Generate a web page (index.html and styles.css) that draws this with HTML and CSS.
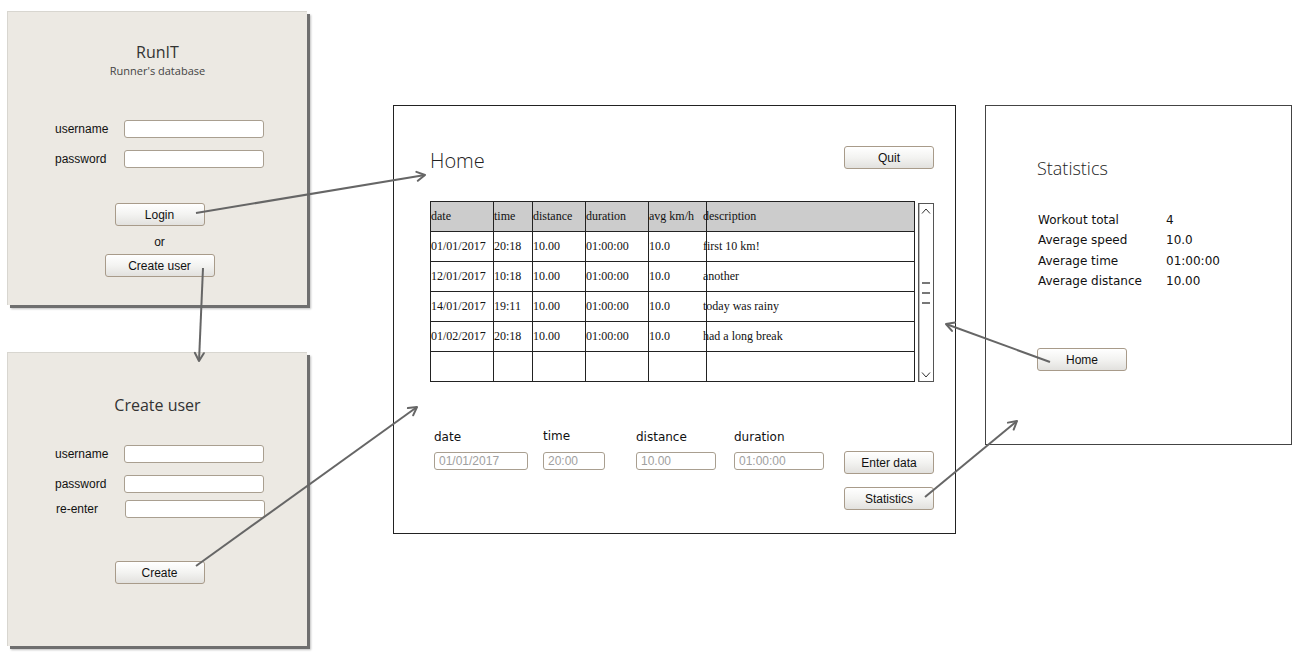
FILE: index.html
```html
<!DOCTYPE html>
<html lang="en">
<head>
    <meta charset="UTF-8">
    <meta name="viewport" content="width=device-width, initial-scale=1.0">
    <title>RunIT wireframe</title>
    <link rel="stylesheet" href="styles.css">
</head>
<body>
    <div class="canvas">

        <!-- login screen -->
        <div class="window panel login">
            <div class="title">RunIT</div>
            <div class="subtitle">Runner's database</div>
            <div class="form">
                <div class="row">
                    <label>username</label>
                    <input type="text" class="field">
                </div>
                <div class="row">
                    <label>password</label>
                    <input type="password" class="field">
                </div>
            </div>
            <button class="btn btn-login">Login</button>
            <div class="or">or</div>
            <button class="btn btn-create">Create user</button>
        </div>

        <!-- create user screen -->
        <div class="window panel register">
            <div class="title">Create user</div>
            <div class="form">
                <div class="row">
                    <label>username</label>
                    <input type="text" class="field">
                </div>
                <div class="row">
                    <label>password</label>
                    <input type="password" class="field">
                </div>
                <div class="row tight">
                    <label>re-enter</label>
                    <input type="password" class="field">
                </div>
            </div>
            <button class="btn btn-submit">Create</button>
        </div>

        <!-- home screen -->
        <div class="window home">
            <div class="home-header">
                <div class="home-title">Home</div>
                <button class="btn">Quit</button>
            </div>
            <div class="table-wrap">
                <table class="runs">
                    <colgroup>
                        <col style="width:63px">
                        <col style="width:39px">
                        <col style="width:53px">
                        <col style="width:63px">
                        <col style="width:58px">
                        <col>
                    </colgroup>
                    <tr class="head">
                        <td>date</td><td>time</td><td>distance</td><td>duration</td><td>avg km/h</td><td class="desc">description</td>
                    </tr>
                    <tr>
                        <td>01/01/2017</td><td>20:18</td><td>10.00</td><td>01:00:00</td><td>10.0</td><td class="desc">first 10 km!</td>
                    </tr>
                    <tr>
                        <td>12/01/2017</td><td>10:18</td><td>10.00</td><td>01:00:00</td><td>10.0</td><td class="desc">another</td>
                    </tr>
                    <tr>
                        <td>14/01/2017</td><td>19:11</td><td>10.00</td><td>01:00:00</td><td>10.0</td><td class="desc">today was rainy</td>
                    </tr>
                    <tr>
                        <td>01/02/2017</td><td>20:18</td><td>10.00</td><td>01:00:00</td><td>10.0</td><td class="desc">had a long break</td>
                    </tr>
                    <tr>
                        <td></td><td></td><td></td><td></td><td></td><td class="desc"></td>
                    </tr>
                </table>
                <div class="scrollbar">
                    <svg class="chev" width="10" height="6" viewBox="0 0 10 6"><path d="M1 5.5 L5 1 L9 5.5" fill="none" stroke="#333" stroke-width="1"/></svg>
                    <div class="grip">
                        <span></span><span></span><span></span>
                    </div>
                    <svg class="chev" width="10" height="6" viewBox="0 0 10 6"><path d="M1 0.5 L5 5 L9 0.5" fill="none" stroke="#333" stroke-width="1"/></svg>
                </div>
            </div>
            <div class="entry">
                <div class="entry-field">
                    <label>date</label>
                    <input type="text" class="field w-date" placeholder="01/01/2017">
                </div>
                <div class="entry-field">
                    <label class="up">time</label>
                    <input type="text" class="field w-time" placeholder="20:00">
                </div>
                <div class="entry-field">
                    <label>distance</label>
                    <input type="text" class="field w-dist" placeholder="10.00">
                </div>
                <div class="entry-field">
                    <label>duration</label>
                    <input type="text" class="field w-dur" placeholder="01:00:00">
                </div>
                <div class="entry-actions">
                    <button class="btn">Enter data</button>
                    <button class="btn">Statistics</button>
                </div>
            </div>
        </div>

        <!-- statistics screen -->
        <div class="window stats">
            <div class="stats-title">Statistics</div>
            <div class="stats-grid">
                <span>Workout total</span><span>4</span>
                <span>Average speed</span><span>10.0</span>
                <span>Average time</span><span>01:00:00</span>
                <span>Average distance</span><span>10.00</span>
            </div>
            <button class="btn">Home</button>
        </div>

        <!-- navigation arrows -->
        <svg class="arrows" width="1300" height="666" viewBox="0 0 1300 666">
            <defs>
                <marker id="head" markerUnits="userSpaceOnUse" markerWidth="12" markerHeight="12" viewBox="0 0 12 12" refX="10" refY="6" orient="auto">
                    <path d="M2 1.5 L10 6 L2 10.5" fill="none" stroke="#666" stroke-width="2" stroke-linecap="round" stroke-linejoin="round"/>
                </marker>
            </defs>
            <line x1="196" y1="213" x2="425" y2="175" marker-end="url(#head)"/>
            <line x1="203" y1="268" x2="199" y2="361" marker-end="url(#head)"/>
            <line x1="196" y1="566" x2="417" y2="407" marker-end="url(#head)"/>
            <line x1="925" y1="497" x2="1017" y2="421" marker-end="url(#head)"/>
            <line x1="1050" y1="362" x2="946" y2="324" marker-end="url(#head)"/>
        </svg>
    </div>
</body>
</html>
```

FILE: styles.css
```css
body {
    margin: 0;
    background: #fff;
    font-family: "Liberation Sans", Arial, sans-serif;
    font-size: 12px;
    color: #111;
}

.canvas {
    position: relative;
    width: 1300px;
    height: 666px;
    overflow: hidden;
}

.window {
    position: absolute;
    box-sizing: border-box;
}

/* grey dialog panels on the left */
.panel {
    width: 300px;
    height: 294px;
    left: 7px;
    background: #ece9e3;
    border-left: 1px solid #d8d6d0;
    border-top: 1px solid #d8d6d0;
    box-shadow: 3px 3px 0 #6f6f6f, 4px 4px 2px rgba(0, 0, 0, 0.25);
    display: flex;
    flex-direction: column;
    align-items: center;
}

.login {
    top: 11px;
    padding-top: 30px;
}

.register {
    top: 352px;
    padding-top: 42px;
}

.title {
    font-family: "Open Sans", sans-serif;
    font-size: 16px;
    line-height: 20px;
    color: #333;
}

.subtitle {
    font-family: "Open Sans", sans-serif;
    font-size: 11px;
    line-height: 14px;
    color: #444;
    margin-top: 2px;
}

.form {
    align-self: stretch;
    padding-left: 47px;
    margin-top: 42px;
}

.register .form {
    margin-top: 30px;
}

.row {
    display: flex;
    align-items: center;
    height: 18px;
    margin-bottom: 12px;
}

.row label {
    width: 69px;
    color: #111;
}

.row.tight {
    margin-top: -5px;
    padding-left: 1px;
}

.field {
    box-sizing: border-box;
    height: 18px;
    margin: 0;
    padding: 0 4px;
    background: #fff;
    border: 1px solid #a99f90;
    border-radius: 3px;
    font-family: "Liberation Sans", Arial, sans-serif;
    font-size: 12px;
    outline: none;
}

.row .field {
    width: 140px;
}

.field::placeholder {
    color: #a0a0a0;
}

.btn {
    box-sizing: border-box;
    width: 90px;
    height: 23px;
    padding: 0;
    background: linear-gradient(#ffffff, #f3f3f1 50%, #e2e1de);
    border: 1px solid #a89b8a;
    border-radius: 3px;
    font-family: "Liberation Sans", Arial, sans-serif;
    font-size: 12px;
    color: #111;
}

.btn-login {
    margin-top: 23px;
    margin-left: 4px;
}

.or {
    margin-top: 9px;
    margin-left: 4px;
    line-height: 14px;
}

.btn-create {
    width: 110px;
    margin-top: 5px;
    margin-left: 4px;
}

.btn-submit {
    margin-top: 31px;
    margin-left: 4px;
}

/* home screen */
.home {
    left: 393px;
    top: 105px;
    width: 563px;
    height: 429px;
    border: 1px solid #222;
    background: #fff;
    padding: 40px 21px 0 36px;
}

.home-header {
    display: flex;
    justify-content: space-between;
    align-items: flex-start;
}

.home-title {
    font-family: "Open Sans", sans-serif;
    font-weight: 300;
    font-size: 20px;
    line-height: 24px;
    margin-top: 3px;
    color: #222;
}

.table-wrap {
    display: flex;
    align-items: flex-start;
    margin-top: 28px;
}

.runs {
    width: 485px;
    table-layout: fixed;
    border-collapse: collapse;
    font-family: "Liberation Serif", "Times New Roman", serif;
    font-size: 12px;
    color: #111;
}

.runs td {
    height: 29px;
    padding: 0;
    border: 1px solid #222;
    white-space: nowrap;
    overflow: visible;
}

.runs .head td {
    background: #cccccc;
}

.runs td.desc {
    text-indent: -4px;
}

.scrollbar {
    box-sizing: border-box;
    width: 16px;
    height: 179px;
    margin-left: 3px;
    margin-top: 2px;
    border: 1px solid #555;
    box-shadow: inset 1px 0 0 #bbb;
    display: flex;
    flex-direction: column;
    align-items: center;
    justify-content: space-between;
    padding: 4px 0 3px;
}

.grip {
    display: flex;
    flex-direction: column;
    gap: 8px;
}

.grip span {
    display: block;
    width: 8px;
    height: 2px;
    background: #777;
}

.chev {
    display: block;
}

.entry {
    display: grid;
    grid-template-columns: 109px 93px 98px 110px 90px;
    padding-left: 4px;
    margin-top: 47px;
}

.entry-field {
    display: flex;
    flex-direction: column;
    align-items: flex-start;
}

.entry-field label {
    font-family: "DejaVu Sans", Verdana, sans-serif;
    font-size: 12px;
    line-height: 16px;
    color: #111;
}

.entry-field label.up {
    margin-top: -1px;
    margin-bottom: 1px;
}

.entry-field .field {
    margin-top: 7px;
    height: 18px;
    padding: 0 4px;
}

.w-date { width: 94px; }
.w-time { width: 62px; }
.w-dist { width: 80px; }
.w-dur  { width: 90px; }

.entry-actions {
    display: flex;
    flex-direction: column;
    gap: 13px;
    margin-top: 22px;
}

/* statistics screen */
.stats {
    left: 985px;
    top: 105px;
    width: 307px;
    height: 340px;
    border: 1px solid #444;
    background: #fff;
    padding: 51px 0 0 51px;
}

.stats-title {
    font-family: "Open Sans", sans-serif;
    font-weight: 300;
    font-size: 18px;
    line-height: 22px;
    color: #222;
}

.stats-grid {
    display: grid;
    grid-template-columns: 128px auto;
    margin-top: 31px;
    padding-left: 1px;
    font-family: "DejaVu Sans", Verdana, sans-serif;
    font-size: 12px;
    line-height: 20.3px;
    color: #111;
}

.stats .btn {
    margin-top: 57px;
}

/* arrows drawn over the windows */
.arrows {
    position: absolute;
    left: 0;
    top: 0;
    pointer-events: none;
}

.arrows line {
    stroke: #666;
    stroke-width: 2;
}
```
